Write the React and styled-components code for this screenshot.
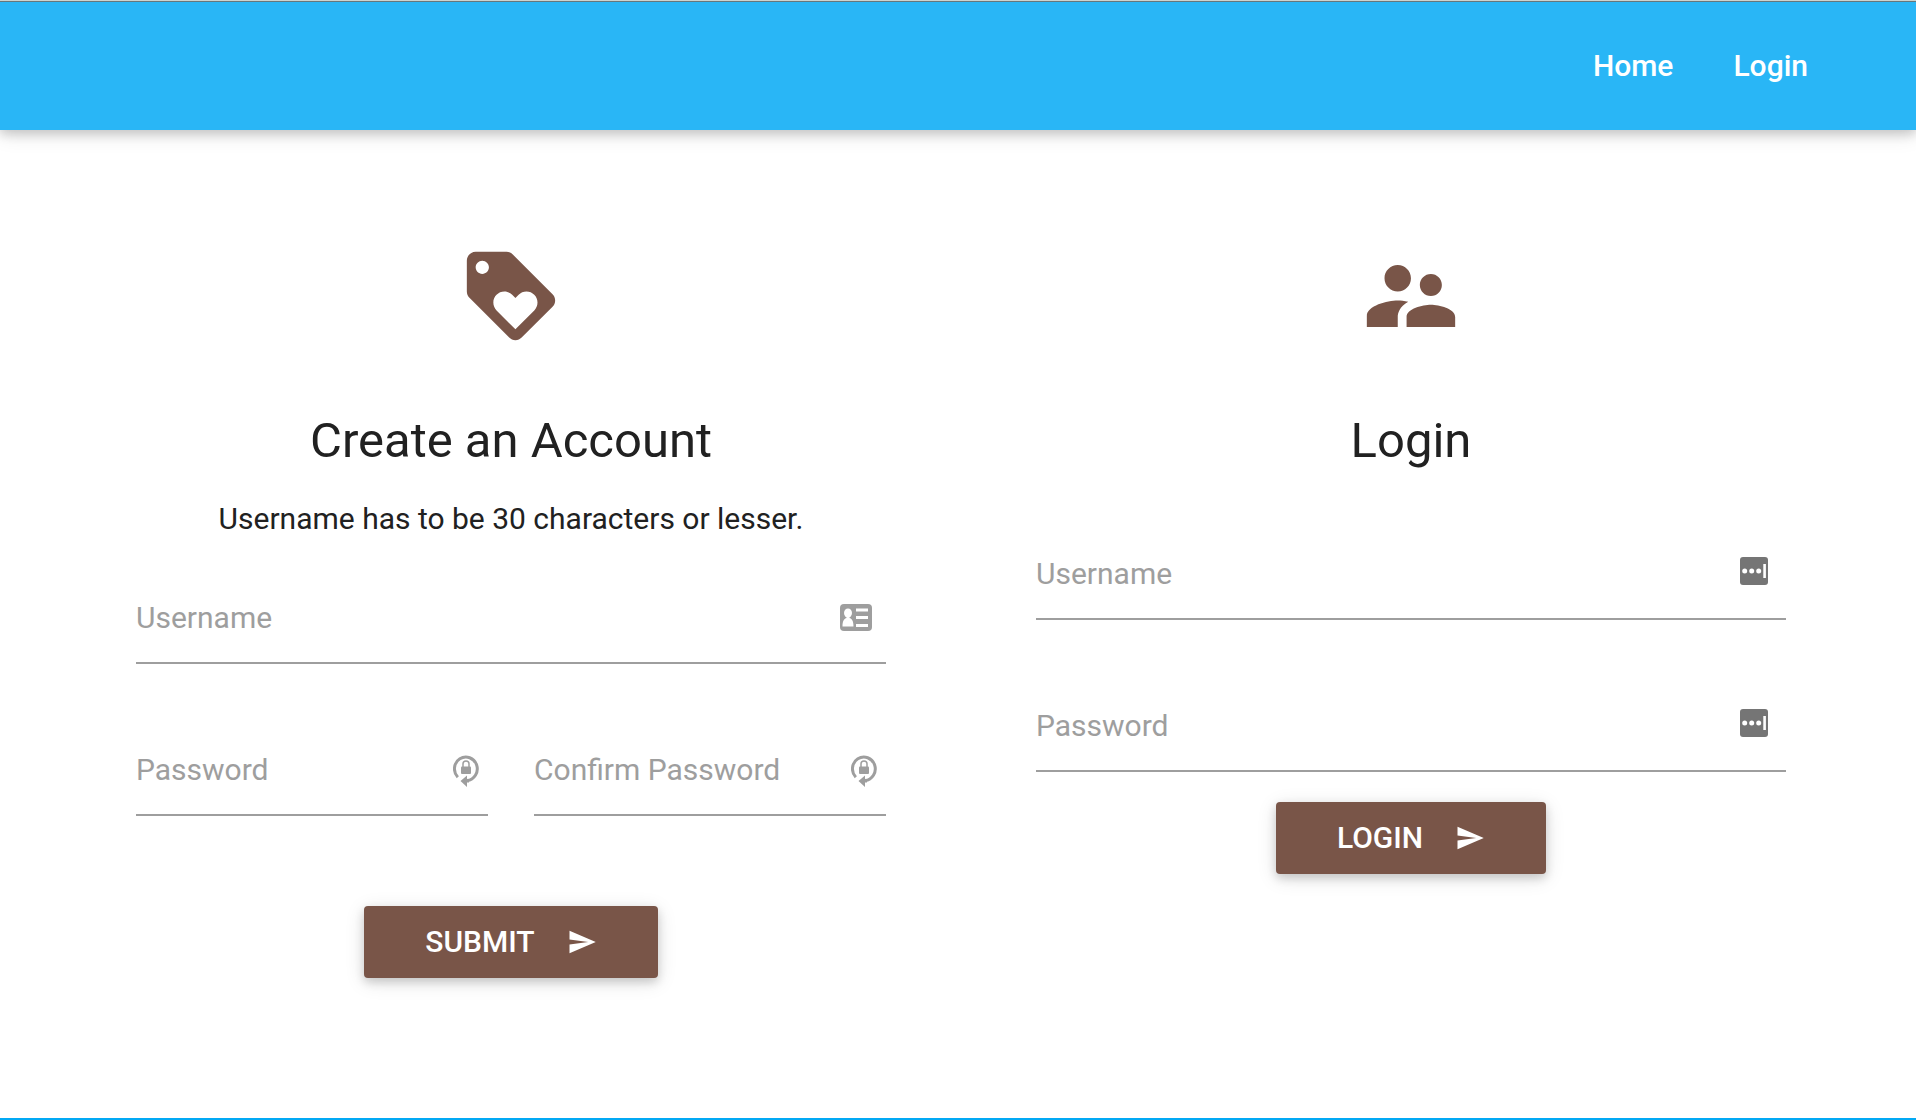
import React from "react";
import styled, { createGlobalStyle } from "styled-components";

const GlobalStyle = createGlobalStyle`
  * { box-sizing: border-box; }
  body {
    margin: 0;
    background: #fff;
    color: #212121;
    font-family: Roboto, "Liberation Sans", sans-serif;
    font-size: 30px;
    line-height: 44px;
  }
`;

const shadow = `0 4px 10px 0 rgba(0, 0, 0, 0.16), 0 4px 20px 0 rgba(0, 0, 0, 0.12)`;

const Page = styled.div`
  min-height: 100vh;
  display: flex;
  flex-direction: column;
`;

const NavBar = styled.nav`
  display: flex;
  justify-content: flex-end;
  align-items: center;
  gap: 60px;
  height: 130px;
  padding: 0 108px 0 60px;
  background: #29b6f6;
  border-top: 1px solid #ccd2ce;
  box-shadow: inset 0 1px 0 #66777c, ${shadow};
`;

const NavLink = styled.a`
  color: #fff;
  font-weight: 500;
  text-decoration: none;
`;

const Main = styled.main`
  flex: 1;
  display: grid;
  grid-template-columns: 1fr 1fr;
  align-items: start;
  gap: 150px;
  padding: 113px 130px 60px 136px;
`;

const Panel = styled.section`
  display: flex;
  flex-direction: column;
  align-items: center;
`;

const HeroIcon = styled.svg`
  width: 106px;
  height: 106px;
  fill: #795548;
`;

const Title = styled.h1`
  margin: 64px 0 0;
  font-size: 49px;
  line-height: 56px;
  font-weight: 400;
`;

const Hint = styled.p`
  margin: 28px 0 0;
`;

const Form = styled.form`
  width: 100%;
  display: flex;
  flex-direction: column;
  align-items: center;
  margin-top: ${(p) => p.$top}px;
`;

const Fields = styled.div`
  width: 100%;
  display: grid;
  grid-template-columns: 1fr 1fr;
  gap: 60px 46px;
`;

const FieldBox = styled.div`
  display: grid;
  grid-template-columns: minmax(0, 1fr);
  align-items: center;
  grid-column: ${(p) => (p.$wide ? "1 / -1" : "auto")};

  & > * {
    grid-area: 1 / 1;
  }
`;

const Input = styled.input`
  width: 100%;
  height: 92px;
  padding: 0 60px 0 0;
  border: 0;
  border-bottom: 2px solid #9e9e9e;
  border-radius: 0;
  outline: 0;
  background: transparent;
  color: inherit;
  font: inherit;

  &:focus {
    border-color: #29b6f6;
  }
  &:not(:placeholder-shown) + label {
    visibility: hidden;
  }
`;

const Label = styled.label`
  color: #9e9e9e;
  pointer-events: none;
`;

const FieldIcon = styled.svg`
  justify-self: end;
  width: ${(p) => p.$w}px;
  height: ${(p) => p.$h}px;
  margin-right: ${(p) => p.$right}px;
  pointer-events: none;
`;

const Button = styled.button`
  display: flex;
  align-items: center;
  gap: 32px;
  height: 72px;
  margin-top: ${(p) => p.$top}px;
  padding: 0 61px;
  border: 0;
  border-radius: 4px;
  background: #795548;
  color: #fff;
  font: inherit;
  font-weight: 500;
  text-transform: uppercase;
  box-shadow: ${shadow};
  cursor: pointer;
`;

const SendIcon = styled.svg`
  width: 30px;
  height: 30px;
  fill: currentColor;
`;

const Footer = styled.footer`
  height: 2px;
  background: #03a9f4;
`;

function CardIcon() {
  return (
    <FieldIcon $w={32} $h={28} $right={14} viewBox="0 0 32 28" aria-hidden="true">
      <rect width="32" height="27" rx="4" fill="#9e9e9e" />
      <g fill="#fff">
        <ellipse cx="8" cy="9" rx="4" ry="4.5" />
        <path d="M6.5 11h3v3c2.5.8 4 3 4 8.5h-11c0-5.5 1.5-7.7 4-8.5z" />
        <rect x="16" y="4.5" width="12" height="3" />
        <rect x="16" y="12" width="12" height="3" />
        <rect x="16" y="20" width="12" height="3" />
      </g>
    </FieldIcon>
  );
}

function RotateLockIcon() {
  return (
    <FieldIcon $w={26} $h={34} $right={9} viewBox="0 0 26 34" aria-hidden="true">
      <path
        d="M4.8 24.2A11.4 11.8 0 1 1 14 27.6"
        fill="none"
        stroke="#9e9e9e"
        strokeWidth="3"
      />
      <path d="M7.5 28L14 22.5v3.500h2v3.500h-2v4.500z" fill="#9e9e9e" />
      <rect x="8" y="13.500" width="10" height="7.500" rx="1" fill="#9e9e9e" />
      <path d="M10 14v-3a3 3 0 0 1 6 0v3" fill="none" stroke="#9e9e9e" strokeWidth="1.5" />
    </FieldIcon>
  );
}

function DotsIcon() {
  return (
    <FieldIcon $w={28} $h={34} $right={18} viewBox="0 0 28 34" aria-hidden="true">
      <rect width="28" height="28" rx="3" fill="#757575" />
      <g fill="#fff">
        <circle cx="4.7" cy="14" r="2.5" />
        <circle cx="11.7" cy="14" r="2.5" />
        <circle cx="18.7" cy="14" r="2.5" />
        <rect x="23.3" y="7" width="2.6" height="14" />
      </g>
    </FieldIcon>
  );
}

function Field({ id, label, type = "text", wide, icon }) {
  return (
    <FieldBox $wide={wide}>
      <Input id={id} type={type} placeholder=" " />
      <Label htmlFor={id}>{label}</Label>
      {icon}
    </FieldBox>
  );
}

function ActionButton({ top, children }) {
  return (
    <Button type="submit" $top={top}>
      {children}
      <SendIcon viewBox="0 0 24 24" aria-hidden="true">
        <path d="M2.01 21L23 12 2.01 3 2 10l15 2-15 2z" />
      </SendIcon>
    </Button>
  );
}

const keepPage = (event) => event.preventDefault();

export default function App() {
  return (
    <Page>
      <GlobalStyle />
      <NavBar>
        <NavLink href="#home">Home</NavLink>
        <NavLink href="#login">Login</NavLink>
      </NavBar>
      <Main>
        <Panel>
          <HeroIcon viewBox="0 0 24 24" aria-hidden="true">
            <path d="M21.41 11.58l-9-9C12.05 2.22 11.55 2 11 2H4c-1.1 0-2 .9-2 2v7c0 .55.22 1.05.59 1.42l9 9c.36.36.86.58 1.41.58.55 0 1.05-.22 1.41-.59l7-7c.37-.36.59-.86.59-1.41 0-.55-.23-1.06-.59-1.42zM5.5 7C4.67 7 4 6.33 4 5.5S4.67 4 5.5 4 7 4.67 7 5.5 6.33 7 5.5 7zm11.77 8.27L13 19.54l-4.27-4.27C8.28 14.81 8 14.19 8 13.5c0-1.38 1.12-2.5 2.5-2.5.69 0 1.32.28 1.77.74l.73.72.73-.73c.45-.45 1.08-.73 1.77-.73 1.38 0 2.5 1.12 2.5 2.5 0 .69-.28 1.32-.73 1.77z" />
          </HeroIcon>
          <Title>Create an Account</Title>
          <Hint>Username has to be 30 characters or lesser.</Hint>
          <Form $top={31} onSubmit={keepPage}>
            <Fields>
              <Field id="new-username" label="Username" wide icon={<CardIcon />} />
              <Field id="new-password" label="Password" type="password" icon={<RotateLockIcon />} />
              <Field
                id="confirm-password"
                label="Confirm Password"
                type="password"
                icon={<RotateLockIcon />}
              />
            </Fields>
            <ActionButton top={90}>Submit</ActionButton>
          </Form>
        </Panel>
        <Panel>
          <HeroIcon viewBox="0 0 24 24" aria-hidden="true">
            <path d="M16.5 12c1.38 0 2.49-1.12 2.49-2.5S17.88 7 16.5 7C15.12 7 14 8.12 14 9.5s1.12 2.5 2.5 2.5zM9 11c1.66 0 2.99-1.34 2.99-3S10.66 5 9 5C7.34 5 6 6.34 6 8s1.34 3 3 3zm7.5 3c-1.83 0-5.5.92-5.5 2.75V19h11v-2.25c0-1.83-3.67-2.75-5.5-2.75zM9 13c-2.33 0-7 1.17-7 3.5V19h7v-2.25c0-.85.33-2.34 2.37-3.47C10.5 13.1 9.66 13 9 13z" />
          </HeroIcon>
          <Title>Login</Title>
          <Form $top={59} onSubmit={keepPage}>
            <Fields>
              <Field id="username" label="Username" wide icon={<DotsIcon />} />
              <Field id="password" label="Password" type="password" wide icon={<DotsIcon />} />
            </Fields>
            <ActionButton top={30}>Login</ActionButton>
          </Form>
        </Panel>
      </Main>
      <Footer />
    </Page>
  );
}
